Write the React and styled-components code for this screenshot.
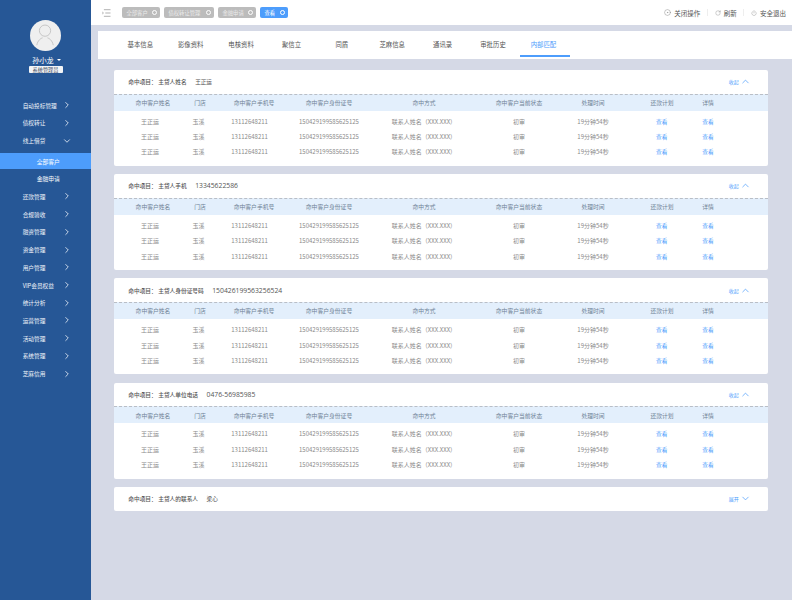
import React from "react"
import styled, { createGlobalStyle } from "styled-components"
import { ChevronRight, ChevronDown, ChevronUp, RotateCw, Power, CircleDot } from "lucide-react"

const menu = [
  { name: "自动投标管理" },
  { name: "债权转让" },
  { name: "线上借贷", open: true, children: ["全部客户", "金融申请"] },
  { name: "还款管理" },
  { name: "合规验收" },
  { name: "融资管理" },
  { name: "资金管理" },
  { name: "用户管理" },
  { name: "VIP会员权益" },
  { name: "统计分析" },
  { name: "运营管理" },
  { name: "活动管理" },
  { name: "系统管理" },
  { name: "芝麻信用" },
]

const tabs = ["基本信息", "影像资料", "电核资料", "聚信立", "同盾", "芝麻信息", "通讯录", "审批历史", "内部匹配"]
const crumbs = [
  { label: "全部客户", width: 38 },
  { label: "债权转让管理", width: 50 },
  { label: "金融申请", width: 38 },
  { label: "查看", width: 28, active: true },
]
const heads = ["命中客户姓名", "门店", "命中客户手机号", "命中客户身份证号", "命中方式", "命中客户当前状态", "处理时间", "还款计划", "详情"]
const cells = ["王正运", "玉溪", "13112648211", "150429199585625125", "联系人姓名（XXX.XXX）", "初审", "19分钟54秒"]

const cards = [
  { label: "主贷人姓名", value: "王正运", open: true, cjk: true },
  { label: "主贷人手机", value: "13345622586", open: true },
  { label: "主贷人身份证号码", value: "150426199563256524", open: true },
  { label: "主贷人单位电话", value: "0476-56985985", open: true },
  { label: "主贷人的联系人", value: "梁心", open: false, cjk: true },
]

const App = () => {
  return (
    <Page>
      <GlobalStyle />
      <Sidebar>
        <Profile>
          <Avatar>
            <svg viewBox="0 0 32 32" width="31" height="31" fill="none" stroke="#c4c4c4" strokeWidth="1">
              <circle cx="15.5" cy="11" r="5.8" />
              <path d="M7 26c1-5 4-7 6-7.6M24 26c-1-5-4-7-6-7.6" />
            </svg>
          </Avatar>
          <UserName>孙小龙<Caret /></UserName>
          <RoleTag>系统管理员</RoleTag>
        </Profile>
        <Menu>
          {menu.map(item => (
            <React.Fragment key={item.name}>
              <MenuItem>
                <span>{item.name}</span>
                {item.open ? <ChevronDown size={10} strokeWidth={2} /> : <ChevronRight size={10} strokeWidth={2} />}
              </MenuItem>
              {item.children && item.children.map((child, i) => (
                <SubItem key={child} $active={i === 0}>{child}</SubItem>
              ))}
            </React.Fragment>
          ))}
        </Menu>
      </Sidebar>
      <Main>
        <TopBar>
          <ToggleIcon viewBox="0 0 9 8" width="8.5" height="8" stroke="#8a8a8a" strokeWidth="0.7" fill="none">
            <path d="M2 .5h7M3.5 4H9M2 7.5h7M0 2.5 1.5 4 0 5.5" />
          </ToggleIcon>
          <Crumbs>
            {crumbs.map(c => (
              <Crumb key={c.label} $width={c.width} $active={c.active}>
                <span>{c.label}</span>
                <CrumbClose $active={c.active} />
              </Crumb>
            ))}
          </Crumbs>
          <Actions>
            <Action><CircleDot size={7} strokeWidth={1.4} />关闭操作</Action>
            <Divider />
            <Action><RotateCw size={6} strokeWidth={1.4} />刷新</Action>
            <Divider />
            <Action><Power size={6} strokeWidth={1.4} />安全退出</Action>
          </Actions>
        </TopBar>
        <TabBar>
          {tabs.map((t, i) => (
            <Tab key={t} $active={i === tabs.length - 1}>{t}</Tab>
          ))}
        </TabBar>
        <Content>
          {cards.map(card => (
            <Card key={card.label}>
              <CardHead>
                <Hit>
                  命中项目：<HitLabel>{card.label}</HitLabel>
                  <HitValue $cjk={card.cjk}>{card.value}</HitValue>
                </Hit>
                <Toggle>
                  {card.open ? "收起" : "展开"}
                  {card.open ? <ChevronUp size={11} strokeWidth={1.6} /> : <ChevronDown size={11} strokeWidth={1.6} />}
                </Toggle>
              </CardHead>
              {card.open && (
                <>
                  <HeadRow>
                    {heads.map(h => <span key={h}>{h}</span>)}
                  </HeadRow>
                  <Rows>
                    {[0, 1, 2].map(r => (
                      <Row key={r}>
                        {cells.map((c, i) => <span key={i}>{c}</span>)}
                        <LinkCell>查看</LinkCell>
                        <LinkCell>查看</LinkCell>
                      </Row>
                    ))}
                  </Rows>
                </>
              )}
            </Card>
          ))}
        </Content>
      </Main>
    </Page>
  )
}

const GlobalStyle = createGlobalStyle`
  html, body {
    margin: 0;
    padding: 0;
    background: #d5d9e6;
  }
  * {
    box-sizing: border-box;
  }
  body {
    font-family: "Noto Sans CJK SC", "Open Sans", sans-serif;
  }
`

// opacity keeps the tiny text on grayscale antialiasing
const Page = styled.div`
  display: flex;
  width: 792px;
  height: 600px;
  overflow: hidden;
  background: #d5d9e6;
  opacity: 0.999;
`

const Sidebar = styled.aside`
  width: 91px;
  flex-shrink: 0;
  background: #265796;
  padding-top: 20px;
`

const Profile = styled.div`
  display: flex;
  flex-direction: column;
  align-items: center;
  height: 76.4px;
`

const Avatar = styled.div`
  width: 31px;
  height: 31px;
  border-radius: 50%;
  background: #efefef;
  display: flex;
  align-items: center;
  justify-content: center;
`

const UserName = styled.div`
  margin-top: 3.5px;
  color: #fff;
  font-size: 7.2px;
  line-height: 10px;
  display: flex;
  align-items: center;
  margin-left: 2px;
`

const Caret = styled.i`
  width: 0;
  height: 0;
  margin-left: 3px;
  border-left: 2px solid transparent;
  border-right: 2px solid transparent;
  border-top: 2px solid #fff;
`

const RoleTag = styled.div`
  margin-top: 1.5px;
  width: 34px;
  height: 7.4px;
  background: #f2f4f7;
  border-radius: 1px;
  color: #3b4a5c;
  font-size: 5.2px;
  line-height: 7.4px;
  text-align: center;
`

const Menu = styled.nav`
  display: flex;
  flex-direction: column;
`

const MenuItem = styled.div`
  height: 17.73px;
  padding-left: 22.7px;
  display: flex;
  align-items: center;
  color: #f0f4fa;
  font-size: 5.7px;

  & span {
    width: 39px;
    white-space: nowrap;
  }
  & svg {
    color: #e6edf6;
  }
`

const SubItem = styled.div`
  height: ${p => (p.$active ? "16px" : "18.5px")};
  margin-top: ${p => (p.$active ? "3.5px" : "0")};
  padding-left: 36.7px;
  display: flex;
  align-items: center;
  color: #fff;
  font-size: 5.8px;
  background: ${p => (p.$active ? "#4d9dfc" : "transparent")};
`

const Main = styled.main`
  flex: 1;
  min-width: 0;
  display: flex;
  flex-direction: column;
`

const TopBar = styled.header`
  height: 25px;
  background: #fff;
  display: flex;
  align-items: center;
  padding: 0 6px 0 11px;
`

const ToggleIcon = styled.svg`
  flex-shrink: 0;
`

const Crumbs = styled.div`
  display: flex;
  margin-left: 11.5px;
  gap: 4px;
`

const Crumb = styled.div`
  width: ${p => p.$width}px;
  height: 11px;
  border-radius: 2px;
  background: ${p => (p.$active ? "#4d9dfc" : "#bcbcbc")};
  color: ${p => (p.$active ? "#fff" : "#ececec")};
  font-size: 5.3px;
  display: flex;
  align-items: center;
  justify-content: space-between;
  padding: 0 3px 0 4.5px;
  white-space: nowrap;
`

const CrumbClose = styled.i`
  width: 5.5px;
  height: 5.5px;
  border-radius: 50%;
  border: 1.6px solid #fff;
`

const Actions = styled.div`
  margin-left: auto;
  display: flex;
  align-items: center;
  gap: 6.7px;
`

const Action = styled.div`
  display: flex;
  align-items: center;
  gap: 3px;
  color: #555;
  font-size: 6.5px;

  & svg {
    color: #777;
  }
`

const Divider = styled.i`
  width: 1px;
  height: 7px;
  background: #eeeeee;
`

const TabBar = styled.div`
  margin: 6px 0 0 7px;
  height: 28px;
  background: #fff;
  display: flex;
  padding-left: 17.1px;
`

const Tab = styled.div`
  position: relative;
  width: 50.4px;
  height: 26px;
  display: flex;
  align-items: center;
  justify-content: center;
  font-size: 6.4px;
  color: ${p => (p.$active ? "#4d9dfc" : "#555")};

  &::after {
    content: "";
    display: ${p => (p.$active ? "block" : "none")};
    position: absolute;
    left: 1.7px;
    right: -1.3px;
    bottom: 0;
    height: 2px;
    background: #4d9dfc;
  }
`

const Content = styled.div`
  padding: 11px 24px 0 23px;
  display: flex;
  flex-direction: column;
  gap: 8.25px;
`

const Card = styled.section`
  background: #fff;
  border-radius: 2px;
  overflow: hidden;
  min-height: 24px;
`

const CardHead = styled.div`
  height: 23.5px;
  display: flex;
  align-items: center;
  justify-content: space-between;
  padding: 0 17.2px 0 14.3px;
`

const Hit = styled.div`
  font-size: 5.7px;
  color: #555;
  font-weight: 500;
  display: flex;
  align-items: center;
`

const HitLabel = styled.span`
  margin-left: 1.5px;
  color: #555;
`

const HitValue = styled.span`
  margin-left: 8.5px;
  font-size: ${p => (p.$cjk ? "5.6px" : "6.8px")};
  font-weight: 400;
  font-family: "Open Sans", "Noto Sans CJK SC", sans-serif;
`

const Toggle = styled.div`
  display: flex;
  align-items: center;
  gap: 1px;
  color: #4d9dfc;
  font-size: 5px;
`

const HeadRow = styled.div`
  display: grid;
  grid-template-columns: 50px 44px 64px 86px 104px 86px 62px 76px 16px;
  align-items: center;
  height: 17px;
  padding-left: 14px;
  background: #e3effc;
  border-top: 1px dashed #b9bec6;
  color: #6f8296;
  font-size: 5.8px;

  & span {
    display: flex;
    justify-content: center;
    white-space: nowrap;
  }
`

const Rows = styled.div`
  padding: 3px 0 6.3px;
`

const Row = styled.div`
  display: grid;
  grid-template-columns: 60px 37.2px 64.8px 94px 96px 94px 54px 83.4px 9.2px;
  align-items: center;
  height: 15.4px;
  padding-left: 6px;
  color: #8b8b8b;
  font-size: 6px;

  & span {
    display: flex;
    justify-content: center;
    white-space: nowrap;
  }
`

const LinkCell = styled.span`
  color: #4d9dfc;
  font-size: 5.7px;
`

export default App
